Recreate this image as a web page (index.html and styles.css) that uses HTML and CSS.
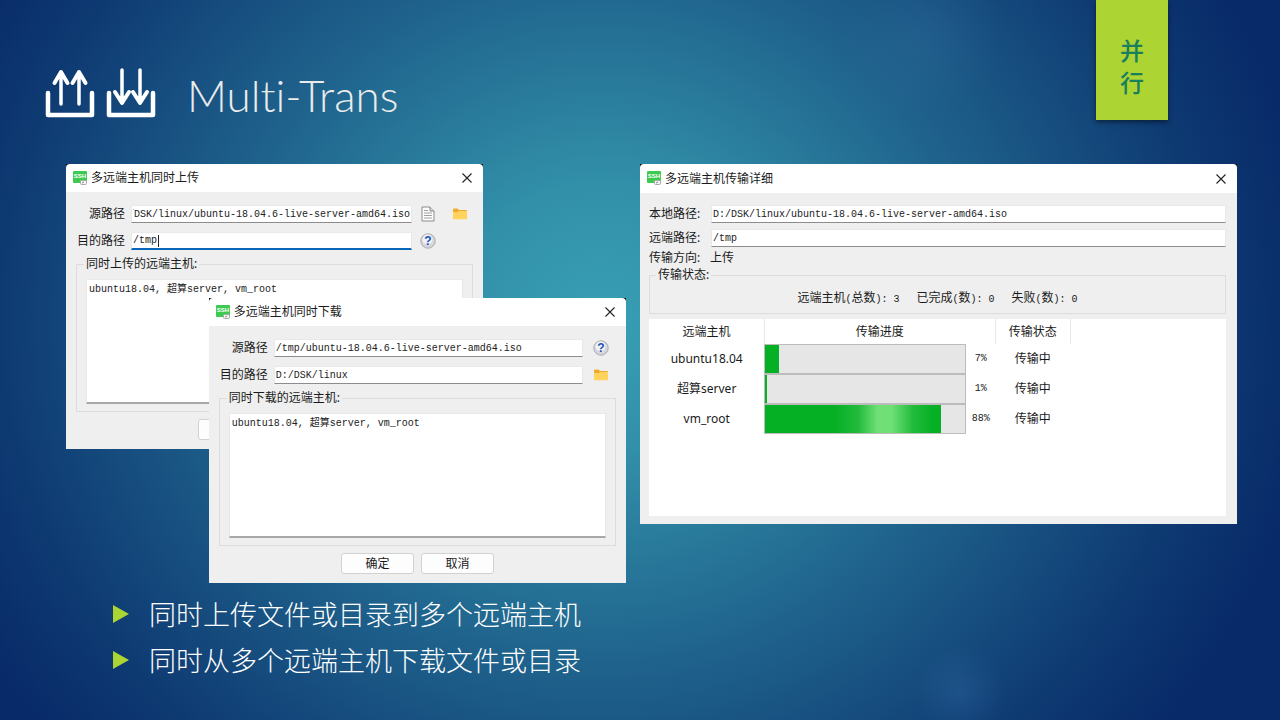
FILE: index.html
```
<!DOCTYPE html>
<html lang="zh-CN">
<head>
    <meta charset="UTF-8">
    <meta name="viewport" content="width=device-width, initial-scale=1.0">
    <title>Multi-Trans</title>
    <link rel="stylesheet" href="styles.css">
</head>
<body>

    <!-- Shared icons -->
    <svg class="sprite" aria-hidden="true">
        <symbol id="ssh" viewBox="0 0 15 15">
            <rect x="0" y="0" width="14" height="12" rx="1" fill="#3ccb50"/>
            <text x="7" y="7" font-family="Liberation Sans, sans-serif" font-size="6" font-weight="bold" text-anchor="middle" fill="#fff">SSH</text>
            <rect x="7.500" y="9.500" width="6" height="4" rx="1" fill="#f4f4f4" stroke="#a9a9a9"/>
            <path d="M9 12l2-1" stroke="#888" fill="none"/>
        </symbol>
        <symbol id="close" viewBox="0 0 10 10">
            <path d="M0.5 0.5l9 9M9.5 0.5l-9 9" stroke="#222" stroke-width="1.1" fill="none"/>
        </symbol>
        <symbol id="file" viewBox="0 0 14 16">
            <path d="M1 1h8l4 4v10H1z" fill="#fdfdfd" stroke="#8a8a8a"/>
            <path d="M9 1v4h4" fill="#ddd" stroke="#8a8a8a"/>
            <path d="M3 4.5h4M3 7h8M3 9.5h8M3 12h8" stroke="#a0a0a0" fill="none"/>
        </symbol>
        <symbol id="folder" viewBox="0 0 14 12">
            <path d="M0 1.5Q0 .5 1 .5h3.500l1.500 1.500h7q1 0 1 1V6H0z" fill="#efab2c"/>
            <path d="M0 4h5l1-1h8v7.500q0 .8-.8.8H.8q-.8 0-.8-.8z" fill="#ffd35c"/>
        </symbol>
        <symbol id="help" viewBox="0 0 16 16">
            <circle cx="8" cy="8" r="7.200" fill="#d6d7db" stroke="#a9abb0"/>
            <circle cx="7.500" cy="6.500" r="5" fill="#f1f2f4"/>
            <text x="8" y="12" font-family="Liberation Sans, sans-serif" font-size="12" font-weight="bold" text-anchor="middle" fill="#1d4fc0">?</text>
        </symbol>
    </svg>

    <div class="ribbon">并<br>行</div>

    <!-- Heading -->
    <header class="heading">
        <svg class="heading-icon" viewBox="0 0 50 50" aria-hidden="true">
            <path d="M3 25v22h44V25" class="tray"/>
            <path d="M16 36V5M34 36V5" class="shaft"/>
            <path d="M9.500 15L16 4l6.500 11M27.500 15L34 4l6.500 11M13 9h6M31 9h6" class="head"/>
        </svg>
        <svg class="heading-icon" viewBox="0 0 50 50" aria-hidden="true">
            <path d="M3 25v22h44V25" class="tray"/>
            <path d="M16 2v31M34 2v31" class="shaft"/>
            <path d="M9 24l7 11 7-11M27 24l7 11 7-11M13 30h6M31 30h6" class="head"/>
        </svg>
        <h1>Multi-Trans</h1>
    </header>

    <main class="desktop">
        <div class="stack">

            <!-- Upload dialog -->
            <section class="window upload">
                <div class="titlebar">
                    <svg class="app-icon"><use href="#ssh"/></svg>
                    <h2>多远端主机同时上传</h2>
                    <button class="close" aria-label="关闭"><svg><use href="#close"/></svg></button>
                </div>
                <form class="window-body">
                    <div class="fields">
                        <label for="upSource">源路径</label>
                        <input type="text" id="upSource" value="D:/DSK/linux/ubuntu-18.04.6-live-server-amd64.iso">
                        <button type="button" class="icon-btn" aria-label="选择文件"><svg class="icon-file"><use href="#file"/></svg></button>
                        <button type="button" class="icon-btn" aria-label="选择目录"><svg class="icon-folder"><use href="#folder"/></svg></button>
                        <label for="upTarget">目的路径</label>
                        <input type="text" id="upTarget" class="active" value="/tmp">
                        <button type="button" class="icon-btn" aria-label="帮助"><svg class="icon-help"><use href="#help"/></svg></button>
                    </div>
                    <fieldset class="hosts">
                        <legend>同时上传的远端主机:</legend>
                        <textarea aria-label="同时上传的远端主机">ubuntu18.04, 超算server, vm_root</textarea>
                    </fieldset>
                    <div class="actions">
                        <button type="button">确定</button>
                        <button type="button">取消</button>
                    </div>
                </form>
            </section>

            <!-- Download dialog -->
            <section class="window download">
                <div class="titlebar">
                    <svg class="app-icon"><use href="#ssh"/></svg>
                    <h2>多远端主机同时下载</h2>
                    <button class="close" aria-label="关闭"><svg><use href="#close"/></svg></button>
                </div>
                <form class="window-body">
                    <div class="fields">
                        <label for="downSource">源路径</label>
                        <input type="text" id="downSource" value="/tmp/ubuntu-18.04.6-live-server-amd64.iso">
                        <button type="button" class="icon-btn" aria-label="帮助"><svg class="icon-help"><use href="#help"/></svg></button>
                        <label for="downTarget">目的路径</label>
                        <input type="text" id="downTarget" value="D:/DSK/linux">
                        <button type="button" class="icon-btn" aria-label="选择目录"><svg class="icon-folder"><use href="#folder"/></svg></button>
                    </div>
                    <fieldset class="hosts">
                        <legend>同时下载的远端主机:</legend>
                        <textarea aria-label="同时下载的远端主机">ubuntu18.04, 超算server, vm_root</textarea>
                    </fieldset>
                    <div class="actions">
                        <button type="button">确定</button>
                        <button type="button">取消</button>
                    </div>
                </form>
            </section>
        </div>

        <!-- Transfer details -->
        <section class="window details">
            <div class="titlebar">
                <svg class="app-icon"><use href="#ssh"/></svg>
                <h2>多远端主机传输详细</h2>
                <button class="close" aria-label="关闭"><svg><use href="#close"/></svg></button>
            </div>
            <div class="window-body">
                <div class="paths">
                    <label for="localPath">本地路径:</label>
                    <input type="text" id="localPath" value="D:/DSK/linux/ubuntu-18.04.6-live-server-amd64.iso" readonly>
                    <label for="remotePath">远端路径:</label>
                    <input type="text" id="remotePath" value="/tmp" readonly>
                </div>
                <p class="direction"><span>传输方向:</span><span>上传</span></p>
                <fieldset class="summary">
                    <legend>传输状态:</legend>
                    <span>远端主机<i>(</i>总数<i>): 3</i></span>
                    <span>已完成<i>(</i>数<i>): 0</i></span>
                    <span>失败<i>(</i>数<i>): 0</i></span>
                </fieldset>
                <div class="table-wrap">
                    <table>
                        <thead>
                            <tr>
                                <th class="col-host">远端主机</th>
                                <th class="col-progress">传输进度</th>
                                <th class="col-state">传输状态</th>
                                <th></th>
                            </tr>
                        </thead>
                        <tbody>
                            <tr>
                                <td>ubuntu18.04</td>
                                <td><div class="bar"><progress max="100" value="7" aria-label="ubuntu18.04"></progress><i>7%</i></div></td>
                                <td>传输中</td>
                                <td></td>
                            </tr>
                            <tr>
                                <td>超算server</td>
                                <td><div class="bar"><progress max="100" value="1" aria-label="超算server"></progress><i>1%</i></div></td>
                                <td>传输中</td>
                                <td></td>
                            </tr>
                            <tr>
                                <td>vm_root</td>
                                <td><div class="bar"><progress class="shine" max="100" value="88" aria-label="vm_root"></progress><i>88%</i></div></td>
                                <td>传输中</td>
                                <td></td>
                            </tr>
                        </tbody>
                    </table>
                </div>
            </div>
        </section>
    </main>

    <ul class="points">
        <li>同时上传文件或目录到多个远端主机</li>
        <li>同时从多个远端主机下载文件或目录</li>
    </ul>

    <script>
        // keep the end of a long path in view
        const source = document.getElementById("upSource");
        source.scrollLeft = source.scrollWidth;
    </script>

</body>
</html>
```
FILE: styles.css
```
/* General styles */
* {
    box-sizing: border-box;
}
body {
    margin: 0;
    min-height: 100vh;
    font-family: "Noto Sans", "Noto Sans CJK SC", sans-serif;
    font-size: 12px;
    line-height: 16px;
    color: #1a1a1a;
    background:
        radial-gradient(circle at 72% 5%, rgba(60, 120, 170, 0.2), transparent 80px),
        radial-gradient(circle at 75% 96%, rgba(60, 120, 180, 0.25), transparent 45px),
        radial-gradient(ellipse 56% 92% at 47% 44%, #389fb3 0%, #3290a9 20%, #226a91 47%, #174f80 68%, #0e3a72 84%, #082a68 100%);
}
h1, h2, p, ul {
    margin: 0;
    padding: 0;
    font-weight: normal;
}
button {
    font: inherit;
    color: inherit;
    padding: 0;
}
svg {
    display: block;
}
.sprite {
    display: none;
}

/* Ribbon */
.ribbon {
    position: absolute;
    top: 0;
    right: 112px;
    width: 72px;
    height: 120px;
    padding-top: 34px;
    background-color: #acd433;
    box-shadow: 0 2px 5px rgba(0, 0, 0, 0.5);
    color: #1a7f5c;
    font-family: "Noto Sans CJK SC", sans-serif;
    font-size: 24px;
    font-weight: 500;
    line-height: 32px;
    text-align: center;
}

/* Heading */
.heading {
    display: flex;
    align-items: center;
    gap: 11px;
    height: 164px;
    padding: 22px 45px 0;
}
.heading-icon {
    width: 50px;
    height: 50px;
    fill: none;
    stroke: #fff;
    stroke-linecap: round;
    stroke-linejoin: round;
}
.tray {
    stroke-width: 4.5;
}
.shaft {
    stroke-width: 3.5;
}
.head {
    stroke-width: 4;
}
.heading h1 {
    margin: 3px 0 0 20px;
    font-family: Lato, sans-serif;
    font-size: 44px;
    font-weight: 300;
    font-variant-ligatures: none;
    line-height: 52px;
    color: #ebebeb;
}

/* Windows */
.desktop {
    display: grid;
    grid-template-columns: 560fr 597fr;
    gap: 14px;
    align-items: start;
    padding: 0 43px 0 66px;
}
.stack {
    position: relative;
    min-height: 419px;
}
.window {
    background-color: #000;
}
.upload, .download {
    position: absolute;
    width: 74.5%;
}
.upload {
    top: 0;
    left: 0;
}
.download {
    right: 0;
    bottom: 0;
}
.titlebar {
    display: flex;
    align-items: center;
    gap: 3px;
    height: 28px;
    padding: 0 11px 0 7px;
    background-color: #fff;
    border-radius: 4px 4px 0 0;
}
.titlebar h2 {
    flex: 1;
    font-size: 12px;
    line-height: 16px;
}
.app-icon {
    width: 15px;
    height: 15px;
}
.close {
    border: none;
    background: none;
}
.close svg {
    width: 10px;
    height: 10px;
}
.window-body {
    display: flow-root;
    background-color: #efefef;
}

/* Form fields */
input, textarea {
    min-width: 0;
    margin: 0;
    border: 1px solid #e9e9e9;
    border-bottom: 1px solid #8c8c8c;
    border-radius: 0;
    outline: none;
    background-color: #fff;
    color: #222;
    font-family: "Liberation Mono", "Noto Sans CJK SC", monospace;
    font-size: 10px;
}
input {
    height: 18px;
    padding: 0 1px;
}
/* text cursor sits after the typed path */
input.active {
    border-bottom: 2px solid #0a66b8;
    background: #fff linear-gradient(#222, #222) 26px 2px / 1px 12px no-repeat;
    caret-color: transparent;
}
.fields {
    display: grid;
    grid-template-columns: 55px 1fr 32px 32px;
    row-gap: 9px;
    align-items: center;
    padding: 13px 7px 0 10px;
}
.download .fields {
    grid-template-columns: 55px 1fr 36px;
}
.fields label {
    height: 18px;
    padding-right: 6px;
    line-height: 18px;
    text-align: right;
    white-space: nowrap;
}
.icon-btn {
    display: flex;
    align-items: center;
    justify-content: center;
    height: 18px;
    border: none;
    background: none;
}
.icon-file {
    width: 14px;
    height: 16px;
}
.icon-folder {
    width: 14px;
    height: 12px;
}
.icon-help {
    width: 16px;
    height: 16px;
}
fieldset {
    min-width: 0;
    border: 1px solid #dcdcdc;
}
legend {
    padding: 0 2px;
}
.hosts {
    margin: 6px 10px 0;
    padding: 7px 9px 7px;
}
.hosts legend {
    margin-left: -2px;
    line-height: 16px;
}
.hosts textarea {
    display: block;
    width: 100%;
    height: 125px;
    padding: 2px;
    border-bottom: 2px solid #a8a8a8;
    line-height: 16px;
    resize: none;
}
.actions {
    display: flex;
    justify-content: center;
    gap: 7px;
    padding: 7px 0 9px;
}
.actions button {
    width: 73px;
    height: 21px;
    border: 1px solid #d2d2d2;
    border-radius: 3px;
    background-color: #fdfdfd;
}

/* Transfer details */
.details .titlebar {
    height: 29px;
}
.details .window-body {
    padding: 12px 11px 8px 9px;
}
.paths {
    display: grid;
    grid-template-columns: 62px 1fr;
    row-gap: 6px;
    align-items: center;
}
.paths label {
    height: 18px;
    line-height: 18px;
}
.direction {
    display: flex;
    margin-top: 3px;
}
.direction span:first-child {
    width: 61px;
}
.summary {
    display: flex;
    justify-content: center;
    gap: 17px;
    margin: 1px 0 0;
    padding: 7px 0;
}
.summary legend {
    margin-left: 6px;
    line-height: 16px;
}
.summary span {
    height: 16px;
}
.summary i, .bar i {
    font-family: "Liberation Mono", monospace;
    font-size: 10px;
    font-style: normal;
}
.table-wrap {
    min-height: 197px;
    margin-top: 5px;
    background-color: #fff;
}
table {
    width: 100%;
    border-collapse: collapse;
    table-layout: fixed;
}
th, td {
    padding: 0;
    font-weight: normal;
    text-align: center;
}
th {
    height: 25px;
    border-right: 1px solid #e8e8e8;
}
th:last-child {
    border-right: none;
}
td {
    height: 30px;
}
.col-host {
    width: 20%;
}
.col-progress {
    width: 40%;
}
.col-state {
    width: 13%;
}
.bar {
    display: flex;
    align-items: center;
}
.bar i {
    width: 29px;
}
progress {
    flex: 1;
    min-width: 0;
    height: 30px;
    border: 1px solid #bcbcbc;
    background-color: #e6e6e6;
    appearance: none;
}
progress::-webkit-progress-bar {
    background-color: #e6e6e6;
}
progress::-webkit-progress-value {
    background-color: #06b025;
}
progress.shine::-webkit-progress-value {
    background-image: linear-gradient(90deg, #06b025 40%, #22bb3c 53%, #6fe076 64%, #6fe076 72%, #22bb3c 84%, #06b025 95%);
}

/* Bullet points */
.points {
    padding: 8px 113px 0;
    list-style: none;
}
.points li {
    display: flex;
    align-items: center;
    gap: 20px;
    font-family: "Noto Sans CJK SC", sans-serif;
    font-size: 27px;
    font-weight: 300;
    line-height: 46px;
    color: #fff;
}
.points li::before {
    content: "";
    border-left: 16px solid #acd433;
    border-top: 9px solid transparent;
    border-bottom: 9px solid transparent;
}
```
